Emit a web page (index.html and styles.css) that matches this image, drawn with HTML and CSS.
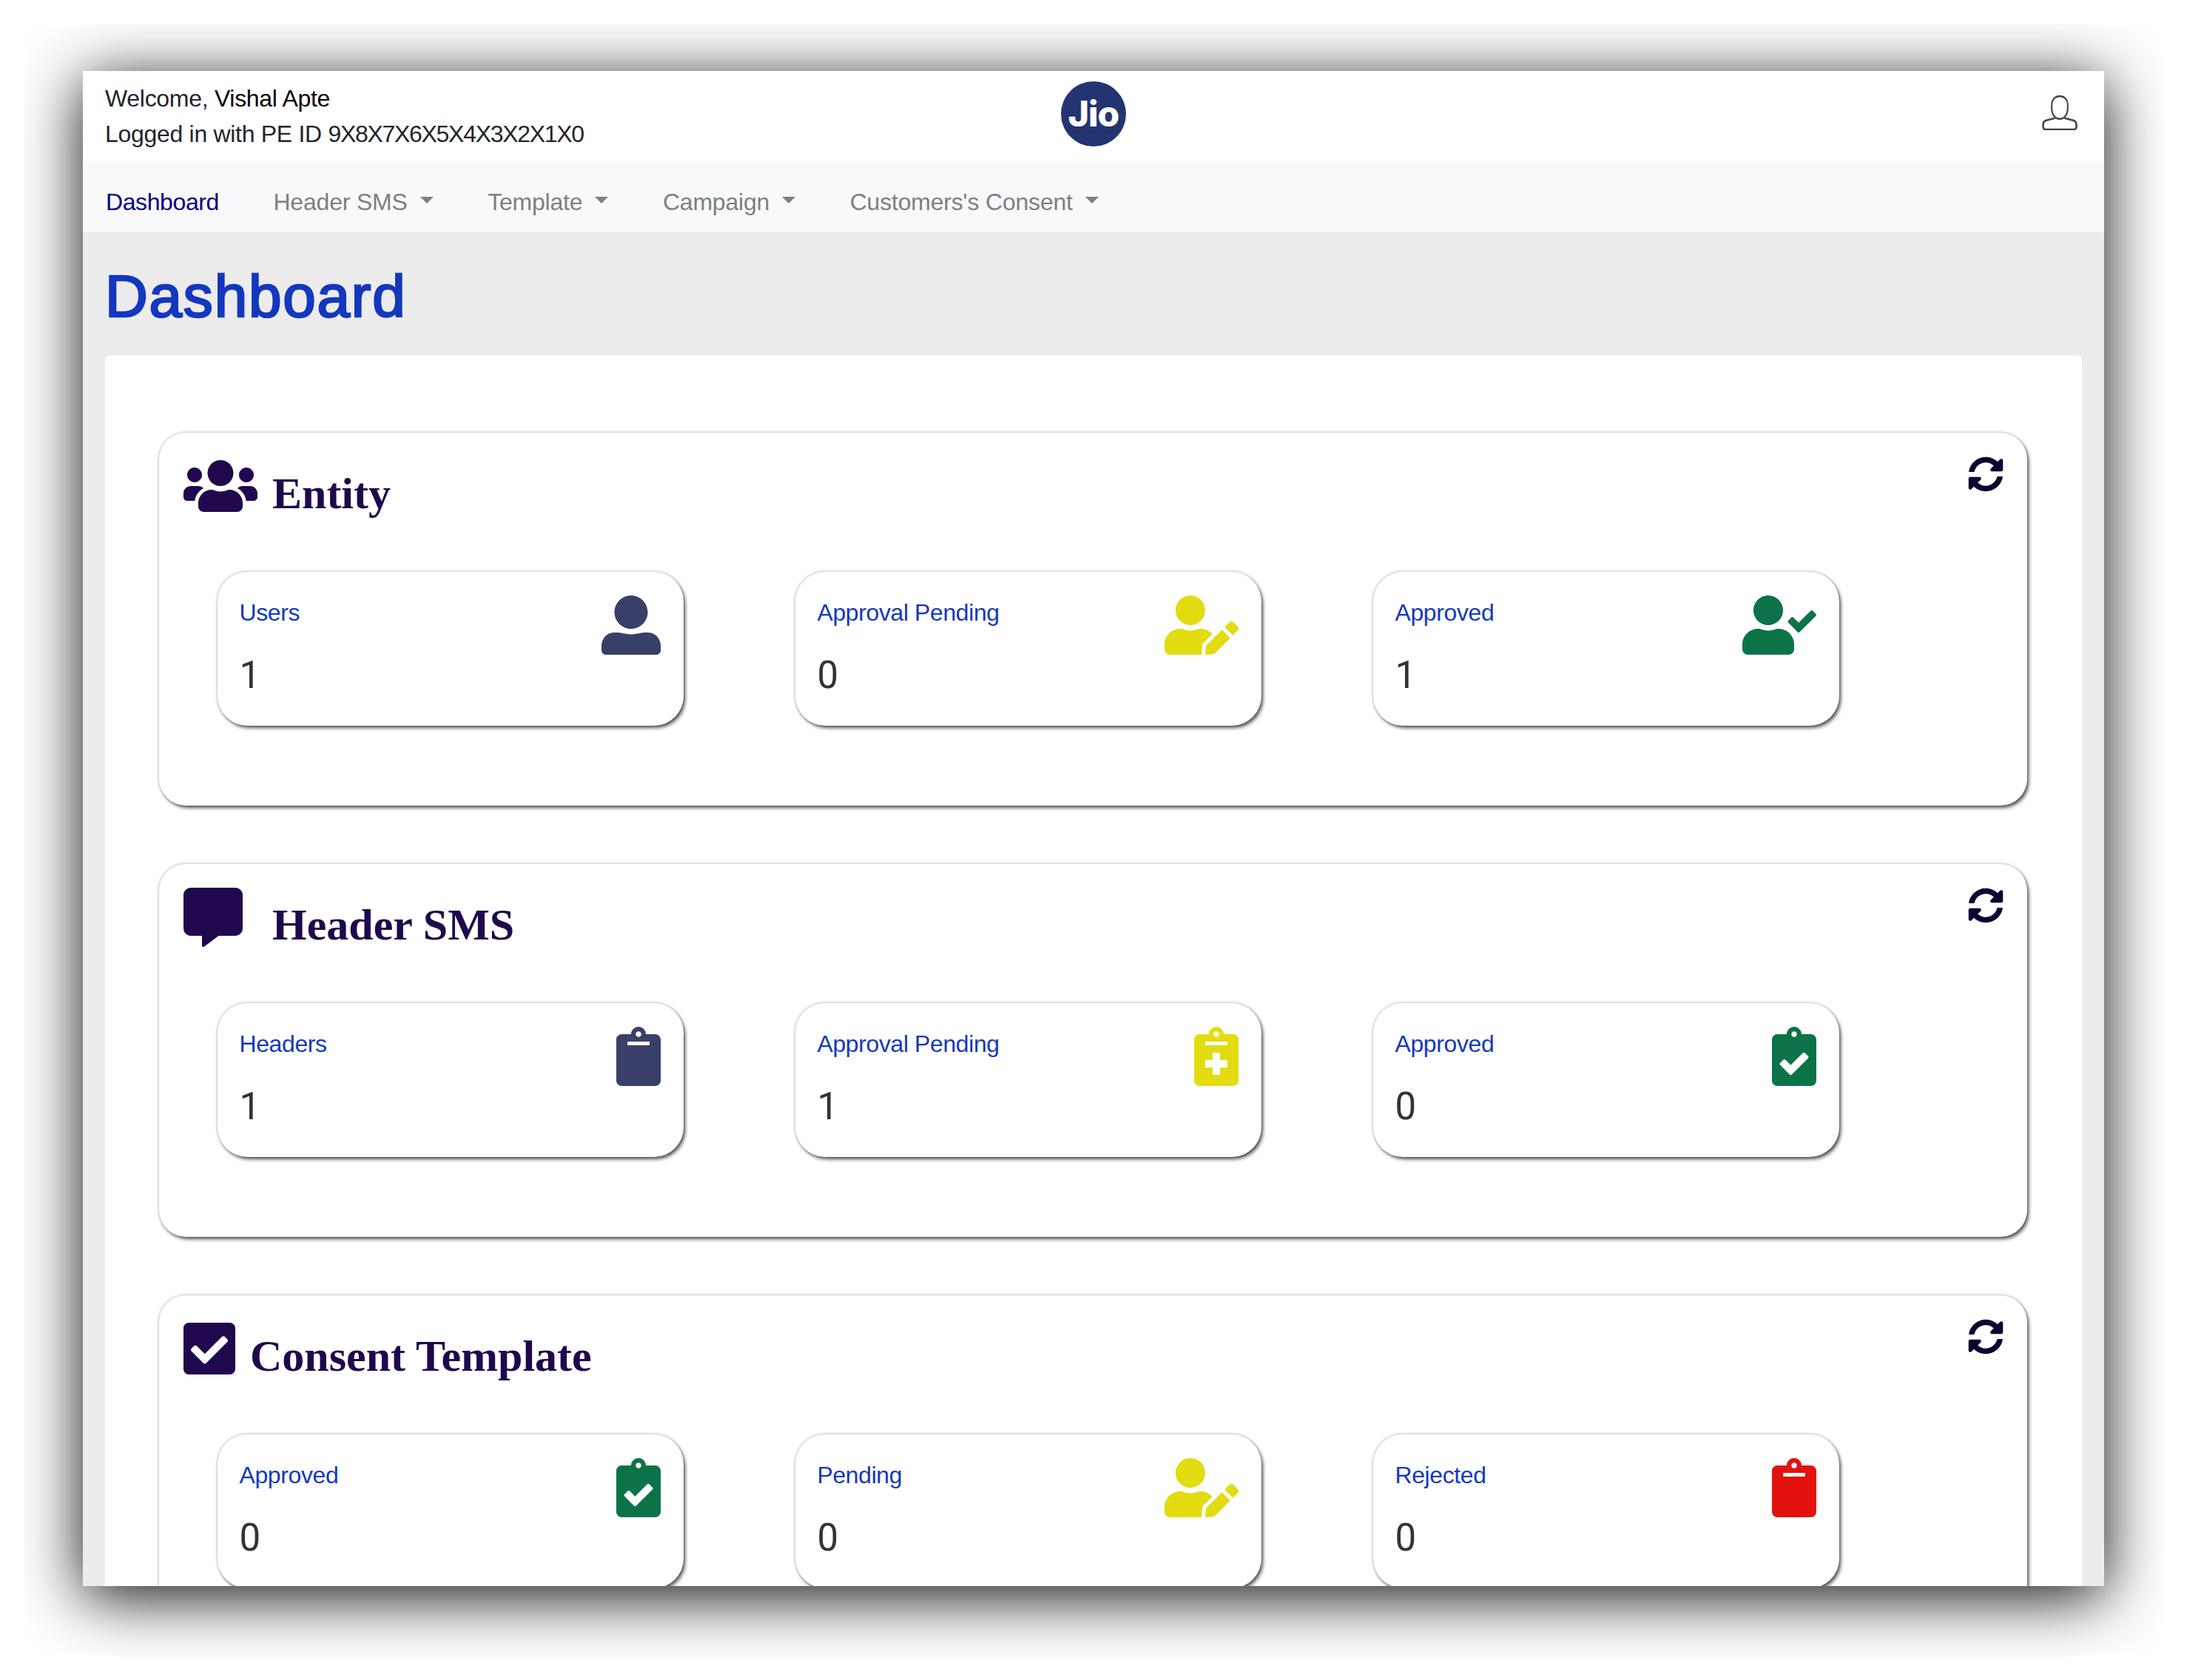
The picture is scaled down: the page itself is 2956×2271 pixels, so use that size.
FILE: index.html
```html
<!DOCTYPE html>
<html lang="en">
<head>
<meta charset="utf-8">
<title>Dashboard</title>
<link rel="stylesheet" href="styles.css">
</head>
<body>
<svg class="defs" width="0" height="0" aria-hidden="true">
  <defs>
    <symbol id="i-sync" viewBox="0 0 512 512"><path d="M370.72 133.28C339.458 104.008 298.888 87.962 255.848 88c-77.458.068-144.328 53.178-162.791 126.85-1.344 5.363-6.122 9.15-11.651 9.15H24.103c-7.498 0-13.194-6.807-11.807-14.176C33.933 94.924 134.813 8 256 8c66.448 0 126.791 26.136 171.315 68.685L463.03 40.97C478.149 25.851 504 36.559 504 57.941V192c0 13.255-10.745 24-24 24H345.941c-21.382 0-32.09-25.851-16.971-40.971l41.75-41.749zM32 296h134.059c21.382 0 32.09 25.851 16.971 40.971l-41.75 41.75c31.262 29.273 71.835 45.319 114.876 45.28 77.418-.07 144.315-53.144 162.787-126.849 1.344-5.363 6.122-9.15 11.651-9.15h57.304c7.498 0 13.194 6.807 11.807 14.176C478.067 417.076 377.187 504 256 504c-66.448 0-126.791-26.136-171.315-68.685L48.97 471.03C33.851 486.149 8 475.441 8 454.059V320c0-13.255 10.745-24 24-24z"/></symbol>
    <symbol id="i-users" viewBox="0 0 640 512"><path d="M96 224c35.3 0 64-28.7 64-64s-28.7-64-64-64-64 28.7-64 64 28.7 64 64 64zm448 0c35.3 0 64-28.7 64-64s-28.7-64-64-64-64 28.7-64 64 28.7 64 64 64zm32 32h-64c-17.6 0-33.5 7.1-45.1 18.6 40.3 22.1 68.9 62 75.1 109.4h66c17.7 0 32-14.3 32-32v-32c0-35.3-28.7-64-64-64zm-256 0c61.9 0 112-50.1 112-112S381.9 32 320 32 208 82.1 208 144s50.1 112 112 112zm76.8 32h-8.3c-20.8 10-43.9 16-68.5 16s-47.6-6-68.5-16h-8.3C179.6 288 128 339.6 128 403.2V432c0 26.5 21.5 48 48 48h288c26.5 0 48-21.5 48-48v-28.8c0-63.6-51.6-115.2-115.2-115.2zm-223.7-13.4C161.5 263.1 145.6 256 128 256H64c-35.3 0-64 28.7-64 64v32c0 17.7 14.3 32 32 32h65.9c6.3-47.4 34.9-87.3 75.2-109.4z"/></symbol>
    <symbol id="i-comment" viewBox="0 0 512 512"><path d="M448 0H64C28.7 0 0 28.7 0 64v288c0 35.3 28.7 64 64 64h96v84c0 9.8 11.2 15.5 19.1 9.7L304 416h144c35.3 0 64-28.7 64-64V64c0-35.3-28.7-64-64-64z"/></symbol>
    <symbol id="i-check-square" viewBox="0 0 448 512"><path d="M400 480H48c-26.51 0-48-21.49-48-48V80c0-26.51 21.49-48 48-48h352c26.51 0 48 21.49 48 48v352c0 26.51-21.49 48-48 48zm-204.686-98.059l184-184c6.248-6.248 6.248-16.379 0-22.627l-22.627-22.627c-6.248-6.248-16.379-6.249-22.628 0L184 302.745l-70.059-70.059c-6.248-6.248-16.379-6.248-22.628 0l-22.627 22.627c-6.248 6.248-6.248 16.379 0 22.627l104 104c6.249 6.25 16.379 6.25 22.628.001z"/></symbol>
    <symbol id="i-person" viewBox="0 0 80 80"><path d="M40 0c12.4 0 22.5 10.1 22.5 22.5S52.4 45 40 45 17.500 34.900 17.500 22.500 27.600 0 40 0zM17 50c2.500 0 7 0 9 .6C31 51.500 35 52.500 40 52.500s9-1 14-1.900c2-.6 6.500-.6 9-.6 10 0 17 8.500 17 18v6c0 3.500-2.500 6-6 6H6c-3.500 0-6-2.500-6-6v-6c0-9.500 7-18 17-18z"/></symbol>
    <symbol id="i-user-edit" viewBox="0 0 640 512"><path d="M224 256c70.700 0 128-57.300 128-128S294.700 0 224 0 96 57.300 96 128s57.300 128 128 128zm89.600 32h-16.700c-22.200 10.200-46.900 16-72.900 16s-50.600-5.800-72.900-16h-16.700C60.200 288 0 348.200 0 422.400V464c0 26.500 21.500 48 48 48h274.900c-2.400-6.800-3.400-14-2.600-21.300l6.800-60.900 1.200-11.100 7.900-7.900 77.300-77.300c-24.500-27.700-60-45.500-99.900-45.500zm45.300 145.300l-6.800 61c-1.100 10.200 7.500 18.800 17.600 17.600l60.900-6.800 137.900-137.900-71.700-71.700-137.900 137.800zM633 268.900L595.100 231c-9.300-9.300-24.500-9.300-33.800 0l-37.800 37.800-4.100 4.100 71.800 71.700 41.800-41.800c9.300-9.400 9.300-24.500 0-33.900z"/></symbol>
    <symbol id="i-user-check" viewBox="0 0 640 512"><path d="M224 256c70.700 0 128-57.300 128-128S294.700 0 224 0 96 57.300 96 128s57.300 128 128 128zm89.600 32h-16.700c-22.200 10.200-46.900 16-72.900 16s-50.600-5.800-72.900-16h-16.700C60.200 288 0 348.200 0 422.400V464c0 26.500 21.500 48 48 48h352c26.500 0 48-21.500 48-48v-41.600c0-74.200-60.200-134.400-134.400-134.400zm323-128.400l-27.800-28.100c-4.600-4.700-12.100-4.700-16.800-.1l-104.800 104-45.500-45.800c-4.600-4.700-12.100-4.700-16.800-.1l-28.100 27.900c-4.700 4.600-4.700 12.100-.1 16.800l81.700 82.300c4.600 4.700 12.100 4.700 16.800.1l141.300-140.200c4.600-4.700 4.700-12.200.1-16.800z"/></symbol>
    <symbol id="i-clipboard" viewBox="0 0 384 512"><path d="M384 112v352c0 26.510-21.490 48-48 48H48c-26.510 0-48-21.490-48-48V112c0-26.510 21.490-48 48-48h80c0-35.290 28.710-64 64-64s64 28.710 64 64h80c26.510 0 48 21.490 48 48zM192 40c-13.255 0-24 10.745-24 24s10.745 24 24 24 24-10.745 24-24-10.745-24-24-24m96 114v-20a6 6 0 0 0-6-6H102a6 6 0 0 0-6 6v20a6 6 0 0 0 6 6h180a6 6 0 0 0 6-6z"/></symbol>
    <symbol id="i-clipboard-check" viewBox="0 0 384 512"><path d="M336 64h-80c0-35.300-28.700-64-64-64s-64 28.700-64 64H48C21.500 64 0 85.500 0 112v352c0 26.500 21.500 48 48 48h288c26.500 0 48-21.500 48-48V112c0-26.500-21.500-48-48-48zM192 40c13.300 0 24 10.700 24 24s-10.700 24-24 24-24-10.700-24-24 10.700-24 24-24zm121.200 231.800l-143 141.800c-4.700 4.700-12.300 4.600-17-.1l-82.600-83.300c-4.700-4.700-4.600-12.300.1-17L99.100 285c4.700-4.700 12.300-4.600 17 .1l46 46.400 106-105.200c4.700-4.700 12.300-4.600 17 .1l28.200 28.400c4.700 4.800 4.600 12.300-.1 17z"/></symbol>
    <symbol id="i-notes" viewBox="0 0 384 512"><path d="M336 64h-80c0-35.300-28.700-64-64-64s-64 28.700-64 64H48C21.500 64 0 85.500 0 112v352c0 26.500 21.500 48 48 48h288c26.500 0 48-21.500 48-48V112c0-26.500-21.500-48-48-48zM192 40c13.300 0 24 10.700 24 24s-10.700 24-24 24-24-10.700-24-24 10.700-24 24-24zm96 304c0 4.400-3.600 8-8 8h-56v56c0 4.400-3.600 8-8 8h-48c-4.400 0-8-3.600-8-8v-56h-56c-4.400 0-8-3.600-8-8v-48c0-4.400 3.600-8 8-8h56v-56c0-4.400 3.600-8 8-8h48c4.400 0 8 3.600 8 8v56h56c4.400 0 8 3.600 8 8v48zm0-192c0 4.400-3.600 8-8 8H104c-4.400 0-8-3.600-8-8v-16c0-4.400 3.600-8 8-8h176c4.400 0 8 3.600 8 8v16z"/></symbol>
  </defs>
</svg>
<div class="shot">
  <div class="window">
    <header class="topbar">
      <div class="welcome">
        <div class="welcome-line">Welcome, <span class="welcome-name">Vishal Apte</span></div>
        <div class="welcome-line">Logged in with PE ID <span class="pe-id">9X8X7X6X5X4X3X2X1X0</span></div>
      </div>
      <div class="logo"><span class="logo-text">Jio</span></div>
      <svg class="profile" viewBox="0 0 48 49" fill="none" stroke="#444" stroke-width="2.600" stroke-linejoin="round" stroke-linecap="round">
        <path d="M24 1.500c7.500 0 13.500 4.500 13.500 12.500v5c0 8-6 14-13.500 14s-13.500-6-13.500-14v-5C10.500 6 16.500 1.500 24 1.500z" transform="translate(4.800 1.500) scale(.8 .98)"/>
        <path d="M16.500 33l-10 2.500C3.500 36.300 1.500 38.500 1.500 41.500v3c0 2 1.500 3.500 3.500 3.500h38c2 0 3.500-1.500 3.500-3.500v-3c0-3-2-5.200-5-6l-10-2.500"/>
      </svg>
    </header>
    <nav class="navbar">
      <a class="nav-link nav-active">Dashboard</a>
      <a class="nav-link nav-drop">Header SMS</a>
      <a class="nav-link nav-drop">Template</a>
      <a class="nav-link nav-drop">Campaign</a>
      <a class="nav-link nav-drop">Customers's Consent</a>
    </nav>
    <main class="page">
      <h1 class="page-title">Dashboard</h1>
      <div class="panel">

        <section class="group">
          <div class="group-head">
            <svg class="group-icon w100"><use href="#i-users"/></svg>
            <h2 class="group-title">Entity</h2>
            <svg class="refresh"><use href="#i-sync"/></svg>
          </div>
          <div class="tiles">
            <div class="tile">
              <div class="tile-text"><div class="tile-label">Users</div><div class="tile-value">1</div></div>
              <svg class="tile-icon w80 navy"><use href="#i-person"/></svg>
            </div>
            <div class="tile">
              <div class="tile-text"><div class="tile-label">Approval Pending</div><div class="tile-value">0</div></div>
              <svg class="tile-icon w100 yellow"><use href="#i-user-edit"/></svg>
            </div>
            <div class="tile">
              <div class="tile-text"><div class="tile-label">Approved</div><div class="tile-value">1</div></div>
              <svg class="tile-icon w100 green"><use href="#i-user-check"/></svg>
            </div>
          </div>
        </section>

        <section class="group">
          <div class="group-head">
            <svg class="group-icon w80 wide-gap"><use href="#i-comment"/></svg>
            <h2 class="group-title">Header SMS</h2>
            <svg class="refresh"><use href="#i-sync"/></svg>
          </div>
          <div class="tiles">
            <div class="tile">
              <div class="tile-text"><div class="tile-label">Headers</div><div class="tile-value">1</div></div>
              <svg class="tile-icon w60 navy"><use href="#i-clipboard"/></svg>
            </div>
            <div class="tile">
              <div class="tile-text"><div class="tile-label">Approval Pending</div><div class="tile-value">1</div></div>
              <svg class="tile-icon w60 yellow"><use href="#i-notes"/></svg>
            </div>
            <div class="tile">
              <div class="tile-text"><div class="tile-label">Approved</div><div class="tile-value">0</div></div>
              <svg class="tile-icon w60 green"><use href="#i-clipboard-check"/></svg>
            </div>
          </div>
        </section>

        <section class="group">
          <div class="group-head">
            <svg class="group-icon w70"><use href="#i-check-square"/></svg>
            <h2 class="group-title">Consent Template</h2>
            <svg class="refresh"><use href="#i-sync"/></svg>
          </div>
          <div class="tiles">
            <div class="tile">
              <div class="tile-text"><div class="tile-label">Approved</div><div class="tile-value">0</div></div>
              <svg class="tile-icon w60 green"><use href="#i-clipboard-check"/></svg>
            </div>
            <div class="tile">
              <div class="tile-text"><div class="tile-label">Pending</div><div class="tile-value">0</div></div>
              <svg class="tile-icon w100 yellow"><use href="#i-user-edit"/></svg>
            </div>
            <div class="tile">
              <div class="tile-text"><div class="tile-label">Rejected</div><div class="tile-value">0</div></div>
              <svg class="tile-icon w60 red"><use href="#i-clipboard"/></svg>
            </div>
          </div>
        </section>

      </div>
    </main>
  </div>
</div>
</body>
</html>
```

FILE: styles.css
```css
* { box-sizing: border-box; }

html, body { margin: 0; padding: 0; background: #fff; }

body {
  font-family: "Liberation Sans", Arial, sans-serif;
  font-size: 32px;
  line-height: 48px;
  color: #212529;
}

.defs { display: block; height: 0; }

.shot {
  width: 2892px;
  height: 2208px;
  margin: 32px 0 0 32px;
  padding: 64px 80px 96px;
  overflow: hidden;
}

.window {
  height: 2048px;
  overflow: hidden;
  background: #ececec;
  box-shadow: 0 14px 80px rgba(0, 0, 0, .94);
}

.topbar {
  display: grid;
  grid-template-columns: 1fr 88px 1fr;
  height: 122px;
  padding: 13px 30px 0;
  background: #fff;
  align-items: start;
}

.welcome-line { color: #212529; letter-spacing: -.3px; white-space: nowrap; }
.welcome-name { color: #000; }
.pe-id { letter-spacing: -1.300px; }

.logo {
  width: 88px;
  height: 88px;
  margin-top: 1px;
  border-radius: 50%;
  background: #243470;
  display: flex;
  align-items: center;
  justify-content: center;
}

.logo-text {
  font-family: Inter, "Liberation Sans", sans-serif;
  font-weight: 800;
  font-size: 48px;
  line-height: 48px;
  letter-spacing: -1px;
  color: #fff;
}

.profile {
  width: 48px;
  height: 49px;
  margin: 18px 6px 0 0;
  justify-self: end;
}

.navbar {
  display: flex;
  align-items: center;
  gap: 73.500px;
  height: 96px;
  padding: 14px 30px 0 31px;
  background: #f8f9fa;
  white-space: nowrap;
}

.nav-link { color: #7f7f7f; letter-spacing: -.2px; display: flex; align-items: center; }
.nav-active { color: #000080; letter-spacing: -.4px; }

.nav-drop::after {
  content: "";
  margin-left: 17px;
  margin-bottom: 6px;
  border-top: 9.600px solid currentColor;
  border-left: 9.600px solid transparent;
  border-right: 9.600px solid transparent;
}

.page { padding: 39px 30px 0; }

.page-title {
  margin: 0 0 31px;
  font-size: 80px;
  line-height: 96px;
  font-weight: 400;
  color: #1338be;
  letter-spacing: 1.800px;
  -webkit-text-stroke: 2.600px #1338be;
}

.panel {
  background: #fff;
  border-radius: 8px;
  padding: 105px 74px 0 73px;
  height: 1700px;
}

.group {
  height: 504px;
  margin-bottom: 79px;
  padding: 32px 32px 0 33px;
  background: #fff;
  border-radius: 36px;
  box-shadow: 3px 4px 5px -1px rgba(0, 0, 0, .65), 0 0 4px rgba(0, 0, 0, .35);
}

.group-head {
  display: flex;
  align-items: flex-start;
  height: 156px;
}

.group-icon { height: 80px; margin-right: 20px; fill: #1f084d; flex: none; }
.wide-gap { margin-right: 40px; }

.group-title {
  margin: 14px 0 0;
  font-family: "Liberation Serif", "Times New Roman", serif;
  font-size: 60px;
  line-height: 72px;
  font-weight: 700;
  color: #1f084d;
}

.refresh { width: 48px; height: 48px; margin-left: auto; fill: #0a0530; flex: none; }

.tiles {
  display: flex;
  gap: 151px;
  padding-left: 46px;
}

.tile {
  display: flex;
  justify-content: space-between;
  align-items: flex-start;
  width: 630px;
  height: 208px;
  padding: 32px 31px 32px 29.500px;
  background: #fff;
  border-radius: 40px;
  box-shadow: 3px 4px 5px -1px rgba(0, 0, 0, .65), 0 0 4px rgba(0, 0, 0, .35);
}

.tile-label { color: #1338be; letter-spacing: -.4px; margin-top: -1px; }

.tile-value {
  margin-top: 24px;
  font-family: Roboto, "Liberation Sans", sans-serif;
  font-weight: 400;
  font-size: 51px;
  line-height: 73px;
  color: #333;
}

.tile-icon { height: 80px; flex: none; }

.w60 { width: 60px; }
.w70 { width: 70px; }
.w80 { width: 80px; }
.w100 { width: 100px; }

.navy { fill: #384069; }
.yellow { fill: #e2dc11; }
.green { fill: #0c7349; }
.red { fill: #e3120f; }
```
